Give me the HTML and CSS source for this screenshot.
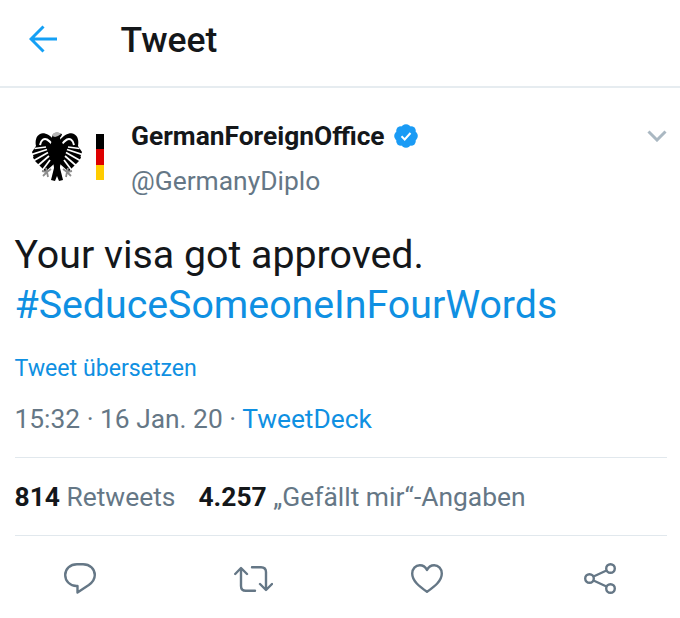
FILE: index.html
```html
<!DOCTYPE html>
<html lang="de">
<head>
<meta charset="utf-8">
<title>Tweet</title>
<link rel="stylesheet" href="styles.css">
</head>
<body>
<header class="topbar">
  <svg class="back" viewBox="0 0 28 28" width="28" height="28"><path d="M28 14H3M14.500 1.500 2 14l12.500 12.500" fill="none" stroke="#14a0f5" stroke-width="3"/></svg>
  <h1 class="title">Tweet</h1>
</header>
<main class="tweet">
  <div class="author">
    <div class="avatar">
      <svg class="eagle" viewBox="0 0 50 49" width="50" height="49">
        <defs>
          <g id="wing">
            <path d="M22 8C18 3 12 0 8 2 4 4 3 9 4 14L0 20l1.500 4.500-.5 1L3 29l2.500 2.500L9 35l1.500 1.500L13 40l9-8z" fill="#000"/>
            <g fill="none" stroke="#fff">
              <path d="M8 13C9 8 12 6 15 7.500c2 1 3.500 2.500 5 4.500" stroke-width="2"/>
              <path d="M2.500 16.500 14 15" stroke-width="1.600"/>
              <path d="M0 22.500 15 17.500" stroke-width="1.700"/>
              <path d="M2 28.500 16 20.500" stroke-width="1.700"/>
              <path d="M6 33.500 17 24" stroke-width="1.700"/>
              <path d="M10.500 38 18 28" stroke-width="1.700"/>
            </g>
            <g fill="none" stroke="#8c8c8c" stroke-width="1.800">
              <path d="M19 37l-4 3-5-1M15 40l-4 4M15 40l1 5M14 36l1 4"/>
            </g>
          </g>
        </defs>
        <use href="#wing"/>
        <use href="#wing" transform="matrix(-1 0 0 1 50 0)"/>
        <path d="M20 5c0-3 3-5 6-4l4 1c0 2-2 3-2 4l1 3c3 3 3 8 2 14-1 6-3 9-3 13l3 12-4 1-2-5-2 5-4-1 3-12c0-4-2-7-3-13-1-6-1-11 1-14z" fill="#000"/>
        <path d="M20 4c1-3 3-4 6-4l3 2-3 2-3 1z" fill="#b4b4b4"/>
      </svg>
      <div class="flag"><span class="flag-black"></span><span class="flag-red"></span><span class="flag-gold"></span></div>
    </div>
    <div class="names">
      <div class="name-row">
        <span class="name">GermanForeignOffice</span>
        <svg class="badge" viewBox="0 0 24 24" width="24" height="24"><g fill="#1a9bf5"><circle cx="12" cy="12" r="9"/><circle cx="12" cy="5" r="4.800"/><circle cx="12" cy="19" r="4.800"/><circle cx="5" cy="12" r="4.800"/><circle cx="19" cy="12" r="4.800"/><circle cx="7" cy="7" r="4.800"/><circle cx="17" cy="7" r="4.800"/><circle cx="7" cy="17" r="4.800"/><circle cx="17" cy="17" r="4.800"/></g><path d="M7.500 12.300l3.200 3.200 5.800-6.500" fill="none" stroke="#fff" stroke-width="2"/></svg>
      </div>
      <div class="handle">@GermanyDiplo</div>
    </div>
    <svg class="chevron" viewBox="0 0 20 12" width="20" height="12"><path d="M1.500 1.500 10 10l8.500-8.500" fill="none" stroke="#aab8c2" stroke-width="3"/></svg>
  </div>
  <p class="text">Your visa got approved.<br><a class="link">#SeduceSomeoneInFourWords</a></p>
  <a class="translate link">Tweet übersetzen</a>
  <div class="meta">15:32 · 16 Jan. 20 · <a class="link">TweetDeck</a></div>
  <div class="stats">
    <span class="stat"><b>814</b> Retweets</span>
    <span class="stat"><b>4.257</b> „Gefällt mir“-Angaben</span>
  </div>
  <div class="actions">
    <svg viewBox="0 0 32 31" width="32" height="31"><path d="M13 1.200h6C26 1.200 30.800 6 30.800 12c0 4.500-2.500 7.500-6 10L13.500 29.500V23h-1C6 23 1.200 18 1.200 12S6 1.200 13 1.200z" fill="none" stroke="#657786" stroke-width="2.400" stroke-linejoin="round"/></svg>
    <svg viewBox="0 0 39 26" width="39" height="26"><path d="M1.200 8 7 2l6 6M7 3v17c0 3 2 4.800 4.800 4.800H21M38 18l-6 6-6-6M32 23V6c0-3-2-4.800-5-4.800h-9" fill="none" stroke="#657786" stroke-width="2.400" stroke-linecap="round" stroke-linejoin="round"/></svg>
    <svg viewBox="0 0 32 29" width="32" height="29"><path d="M16 27.800C8.500 22.500 1.200 17 1.200 9.500 1.200 4.800 4.500 1.200 8.800 1.200c3 0 5.700 1.800 7.200 4.800 1.500-3 4.200-4.800 7.200-4.800 4.300 0 7.600 3.600 7.600 8.300C30.800 17 23.500 22.500 16 27.800z" fill="none" stroke="#657786" stroke-width="2.400" stroke-linejoin="round"/></svg>
    <svg class="share" viewBox="0 0 33 31" width="33" height="31"><g fill="none" stroke="#657786" stroke-width="2.400"><circle cx="5.500" cy="15.500" r="4.300"/><circle cx="26.500" cy="5.500" r="4.300"/><circle cx="26.500" cy="25.500" r="4.300"/><path d="M9.500 13.500 22.500 7.500M9.500 17.500 22.500 23.500"/></g></svg>
  </div>
</main>
</body>
</html>
```
FILE: styles.css
```css
* { box-sizing: border-box; }
html, body { margin: 0; padding: 0; }
body { width: 680px; height: 618px; overflow: hidden; background: #fff; font-family: Roboto, "Liberation Sans", sans-serif; color: #14171a; }
.topbar { display: flex; align-items: center; height: 88px; padding: 0 0 7px 29px; border-bottom: 2px solid #e6ecf0; }
.back { display: block; margin-bottom: 2px; }
.title { margin: 0 0 0 63.5px; font-size: 35.5px; font-weight: 500; line-height: 40px; }
.tweet { padding: 0 0 0 14.5px; }
.author { display: flex; align-items: flex-start; padding-top: 31px; height: 142px; }
.avatar { display: flex; align-items: flex-end; width: 116.5px; padding: 13px 0 0 17.5px; }
.flag { display: flex; flex-direction: column; width: 8px; height: 46px; margin-left: 14px; margin-bottom: 1px; }
.flag span { flex: 1; }
.flag-black { background: #000; }
.flag-red { background: #d00; }
.flag-gold { background: #fc0; }
.names { flex: 1; }
.name-row { display: flex; align-items: center; gap: 9px; height: 34px; }
.name { font-size: 26.35px; font-weight: 700; }
.handle { margin-top: 13px; font-size: 26.4px; line-height: 30px; color: #657786; }
.chevron { margin: 11px 13px 0 0; }
.text { margin: 0; font-size: 39.3px; line-height: 50px; }
.link { color: #0f90e2; }
.translate { display: block; margin-top: 25px; font-size: 23.15px; line-height: 28px; }
.meta { margin-top: 21px; font-size: 26.35px; line-height: 30px; color: #657786; }
.stats { display: flex; gap: 23px; width: 652.5px; height: 79px; margin-top: 23px; padding-top: 24px; border-top: 1px solid #e1e8ed; border-bottom: 1px solid #e1e8ed; font-size: 26.4px; line-height: 30px; color: #657786; }
.stat b { color: #14171a; font-weight: 700; }
.actions { display: flex; align-items: center; gap: 138px; margin: 27px 0 0 49.5px; }
.share { margin-left: 3px; }
```
